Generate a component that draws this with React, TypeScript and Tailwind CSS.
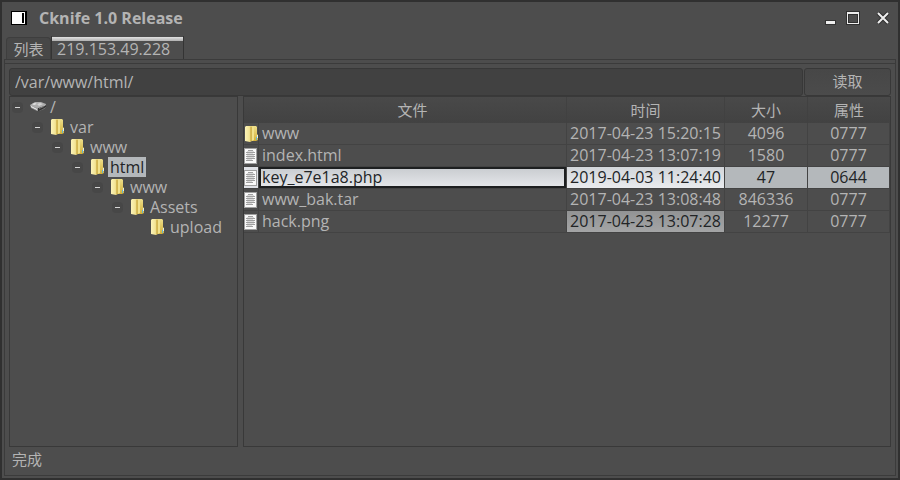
import React from "react";

type TreeNode = { name: string; drive?: boolean; selected?: boolean; children?: TreeNode[] };

const tree: TreeNode = {
  name: "/",
  drive: true,
  children: [
    {
      name: "var",
      children: [
        {
          name: "www",
          children: [
            {
              name: "html",
              selected: true,
              children: [{ name: "www", children: [{ name: "Assets", children: [{ name: "upload" }] }] }],
            },
          ],
        },
      ],
    },
  ],
};

type FileRow = {
  name: string;
  time: string;
  size: string;
  mode: string;
  folder?: boolean;
  editing?: boolean;
  timeMarked?: boolean;
};

const files: FileRow[] = [
  { name: "www", time: "2017-04-23 15:20:15", size: "4096", mode: "0777", folder: true },
  { name: "index.html", time: "2017-04-23 13:07:19", size: "1580", mode: "0777" },
  { name: "key_e7e1a8.php", time: "2019-04-03 11:24:40", size: "47", mode: "0644", editing: true },
  { name: "www_bak.tar", time: "2017-04-23 13:08:48", size: "846336", mode: "0777" },
  { name: "hack.png", time: "2017-04-23 13:07:28", size: "12277", mode: "0777", timeMarked: true },
];

function FolderIcon() {
  return (
    <svg className="block shrink-0" width="14" height="16" viewBox="0 0 14 16" aria-hidden="true">
      <defs>
        <linearGradient id="folderFront" x1="0" y1="0" x2="1" y2="0">
          <stop offset="0" stopColor="#fbf3b8" />
          <stop offset="0.6" stopColor="#f3e596" />
          <stop offset="1" stopColor="#d9be58" />
        </linearGradient>
        <linearGradient id="folderBack" x1="0" y1="0" x2="0" y2="1">
          <stop offset="0" stopColor="#f0e08a" />
          <stop offset="1" stopColor="#d3b03a" />
        </linearGradient>
      </defs>
      <path d="M5 0 H12 L13 1 V8 L14 9 V14 L12 15 H5 Z" fill="url(#folderBack)" />
      <path d="M1 1 L2 0 H7 L8 1 V15 L6 16 L1 15 Z" fill="url(#folderFront)" />
      <path d="M6 1 L8 1 V15 L6 15 Z" fill="#cfb04c" fillOpacity="0.7" />
      <path d="M8 1 H10 V14 L8 15 Z" fill="#f1e28d" />
      <rect x="13" y="9" width="1" height="3" fill="#e2eef0" />
      <rect x="12" y="11" width="1" height="3" fill="#65b5c9" />
    </svg>
  );
}

function FileIcon() {
  return (
    <svg className="block shrink-0" width="13" height="16" viewBox="0 0 13 16" aria-hidden="true">
      <rect x="0.5" y="0.5" width="12" height="15" fill="#fafafa" stroke="#a0a0a0" />
      <path d="M4 2.5H9M2 4.5H11M2 6.5H11M2 8.5H11M2 10.5H11M2 12.5H9" stroke="#a0a0a0" fill="none" />
      <path d="M3 3.5H10M3 5.5H9M3 7.5H10M3 9.5H10M3 11.5H8" stroke="#dadada" fill="none" />
    </svg>
  );
}

function DriveIcon() {
  return (
    <svg className="block shrink-0" width="16" height="16" viewBox="0 0 16 16" aria-hidden="true">
      <path d="M0 6 L16 5 L16 8 L14 10 L9 12 L7 12 L1 9 Z" fill="#999" />
      <path d="M8 9 L16 6 L16 8 L13 10 L9 12 L8 12 Z" fill="#333" />
      <path d="M0 6 L5 3 L11 3 L16 5 L15 7 L8 9 L1 7 Z" fill="#adadad" />
      <path d="M2 5 L5 4 L7 5 L4 6 Z" fill="#e4e4e4" />
      <path d="M7 5 L10 4 L13 5 L9 7 Z" fill="#d4d4d4" />
      <path d="M1 7.5 L7 10.5" stroke="#f2f2f2" />
      <path d="M9 9.5 L14 7.5" stroke="#777" />
    </svg>
  );
}

function Branch({ node }: { node: TreeNode }) {
  return (
    <li role="treeitem" aria-selected={!!node.selected} aria-expanded={node.children ? true : undefined}>
      <div className="flex h-5 items-center">
        {node.children ? (
          <button
            type="button"
            aria-label={"收起 " + node.name}
            className="flex size-[11px] items-center justify-center rounded-sm bg-[#474747]"
          >
            <span className="h-px w-[5px] bg-[#d6d6d6]" />
          </button>
        ) : (
          <span className="w-[11px]" />
        )}
        <span className="ml-[7px] flex w-[18px]">{node.drive ? <DriveIcon /> : <FolderIcon />}</span>
        <span className={node.selected ? "h-5 bg-[#b4b8bb] pr-0.5 pl-0.5 leading-5 text-[#222426]" : "pl-0.5 leading-5"}>
          {node.name}
        </span>
      </div>
      {node.children && (
        <ul role="group" className="pl-5">
          {node.children.map((child) => (
            <Branch key={child.name} node={child} />
          ))}
        </ul>
      )}
    </li>
  );
}

function TitleBar() {
  return (
    <header className="mb-1 flex h-7 items-center pr-0.5 pl-[7px]">
      <svg width="16" height="14" viewBox="0 0 16 14" aria-hidden="true">
        <rect width="16" height="14" fill="#000" />
        <rect x="1" y="1" width="13" height="12" fill="#fff" />
        <rect x="11" y="2" width="2" height="10" fill="#000" />
      </svg>
      <h1 className="ml-3 flex-1 font-bold">Cknife 1.0 Release</h1>
      <button type="button" aria-label="最小化" className="p-1">
        <svg width="12" height="14" viewBox="0 0 12 14" aria-hidden="true">
          <rect x="1" y="9" width="11" height="5" fill="#333" />
          <rect x="2" y="10" width="9" height="3" fill="#eee" />
        </svg>
      </button>
      <button type="button" aria-label="最大化" className="ml-0.5 p-1">
        <svg width="14" height="14" viewBox="0 0 14 14" aria-hidden="true">
          <rect width="14" height="14" fill="#303030" />
          <path fillRule="evenodd" d="M1 1H13V13H1ZM2 3V12H12V3Z" fill="#eee" />
          <rect x="3" y="4" width="8" height="7" fill="#4d4d4d" />
        </svg>
      </button>
      <button type="button" aria-label="关闭" className="ml-2 p-1">
        <svg width="14" height="14" viewBox="0 0 14 14" aria-hidden="true">
          <path d="M2 2L12 12M12 2L2 12" stroke="#303030" strokeWidth="4" />
          <path d="M2 2L12 12M12 2L2 12" stroke="#eee" strokeWidth="2" />
        </svg>
      </button>
    </header>
  );
}

function FileTable() {
  const line = "border-r border-b border-[#434343]";
  return (
    <table className="w-full table-fixed border-separate border-spacing-0">
      <colgroup>
        <col className="w-[15px]" />
        <col />
        <col className="w-[158px]" />
        <col className="w-[83px]" />
        <col className="w-[82px]" />
      </colgroup>
      <thead>
        <tr className="h-[26px] bg-linear-to-b from-[#494949] to-[#424242] text-[15px]">
          <td className="p-0" />
          <th className="border-r border-[#414141] p-0 font-normal">文件</th>
          <th className="border-r border-[#414141] p-0 font-normal">时间</th>
          <th className="border-r border-[#414141] p-0 font-normal">大小</th>
          <th className="p-0 font-normal">属性</th>
        </tr>
      </thead>
      <tbody>
        {files.map((f) => (
          <tr key={f.name} className="h-[22px] leading-[21px]">
            <td className={f.editing ? line + " bg-[#dfe1e6] p-0" : line + " p-0"}>
              {f.folder ? <FolderIcon /> : <FileIcon />}
            </td>
            <td className={line + " p-0"}>
              {f.editing ? (
                <input
                  aria-label="文件名"
                  defaultValue={f.name}
                  className="block h-[21px] w-full border-2 border-[#1d1f20] bg-linear-to-b from-[#cacdd1] to-[#e4e6e9] px-px text-[#222426] outline-none"
                />
              ) : (
                <span className="block h-[21px] pl-[3px]">{f.name}</span>
              )}
            </td>
            <td
              className={
                f.editing
                  ? line + " bg-linear-to-b from-[#d3d6da] to-[#e9ebee] p-0 text-center text-[#222426]"
                  : f.timeMarked
                    ? line + " bg-linear-to-b from-[#929394] to-[#a4a5a6] p-0 text-center text-[#222426]"
                    : line + " p-0 text-center"
              }
            >
              {f.time}
            </td>
            <td className={f.editing ? line + " bg-[#b4b8bb] p-0 text-center text-[#222426]" : line + " p-0 text-center"}>
              {f.size}
            </td>
            <td className={f.editing ? line + " bg-[#b4b8bb] p-0 text-center text-[#222426]" : line + " p-0 text-center"}>
              {f.mode}
            </td>
          </tr>
        ))}
      </tbody>
    </table>
  );
}

export default function App() {
  return (
    <div className="flex min-h-screen flex-col border-2 border-[#303030] bg-[#4d4d4d] p-0.5 font-['Open_Sans','Noto_Sans_CJK_SC',sans-serif] text-[16px] text-[#b4b4b4]">
      <TitleBar />
      <div role="tablist" className="flex h-[23px] items-stretch pl-0.5">
        <button
          type="button"
          role="tab"
          aria-selected="false"
          className="mt-px w-[45px] rounded-t-sm border border-b-0 border-[#3e3e3e] bg-[#474747] text-[15px] leading-5"
        >
          列表
        </button>
        <button
          type="button"
          role="tab"
          aria-selected="true"
          className="-mb-px flex w-[133px] flex-col items-stretch justify-start border-x border-[#343434] bg-[#4d4d4d] pt-px"
        >
          <span className="h-1 bg-linear-to-b from-[#e2e2e2] to-[#b0b0b0]" />
          <span className="pl-[5px] text-left leading-4">219.153.49.228</span>
        </button>
      </div>
      <main className="flex flex-1 flex-col border border-[#3b3b3b]">
        <div className="h-1 border-b border-[#3b3b3b]" />
        <div className="flex flex-1 flex-col px-1 pt-1">
          <form className="flex h-7 gap-px">
            <input
              aria-label="路径"
              defaultValue="/var/www/html/"
              className="min-w-0 flex-1 rounded-[3px] border border-[#383838] bg-[#414141] px-[5px] outline-none"
            />
            <button
              type="button"
              className="w-[87px] rounded-[3px] border border-[#383838] bg-linear-to-b from-[#474747] to-[#4b4b4b] pb-0.5 text-[15px]"
            >
              读取
            </button>
          </form>
          <div className="flex flex-1 gap-[5px]">
            <ul role="tree" className="w-[229px] border border-[#393939] pl-0.5">
              <Branch node={tree} />
            </ul>
            <section className="min-w-0 flex-1 border border-[#393939]">
              <FileTable />
            </section>
          </div>
          <footer className="h-7 pl-[3px] text-[15px] leading-6">完成</footer>
        </div>
      </main>
    </div>
  );
}
